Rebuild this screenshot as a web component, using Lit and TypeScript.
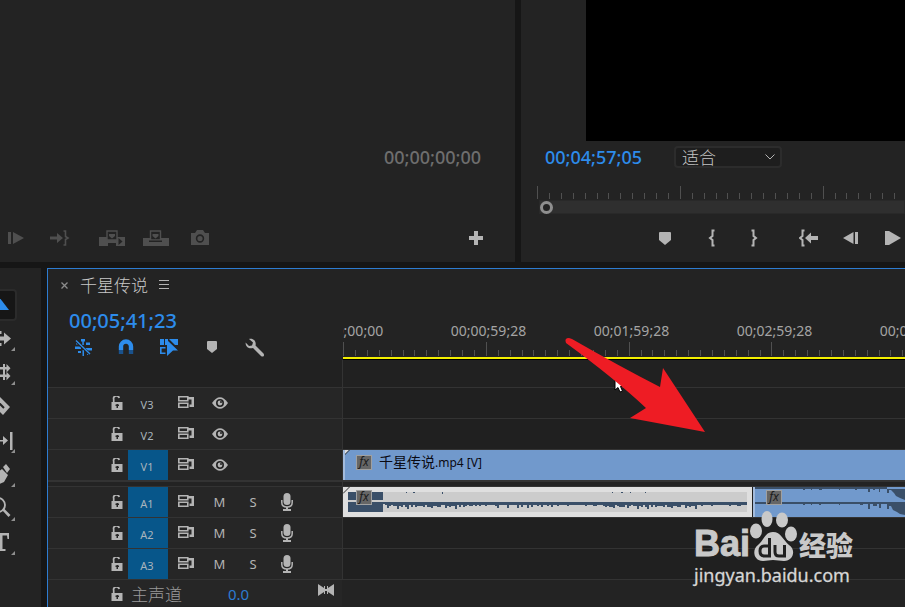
import { LitElement, html, css, svg } from "lit";
import { customElement } from "lit/decorators.js";
import { classMap } from "lit/directives/class-map.js";

const icon = (w: number, h: number, body: unknown) =>
  html`<svg width=${w} height=${h} viewBox="0 0 ${w} ${h}" aria-hidden="true">${body}</svg>`;

const icons = {
  playInOut: icon(16, 12, svg`<path d="M0 0h3v12H0zM5 0l11 6-11 6z"/>`),
  goOut: icon(20, 16, svg`<path d="M0 6.500h7V3l6 5-6 5V9.500H0z"/><path d="M13.500 1h2v5.500L18 8l-2.500 1.500V15h-2" fill="none" stroke="currentColor" stroke-width="1.600"/>`),
  insert: icon(26, 16, svg`<path d="M0 7h26v9H17v-3H9v3H0z"/><path d="M8 1h10v9H8z" fill="#232323" stroke="currentColor" stroke-width="1.400"/><path d="M10 4h6v2l-3 2.500L10 6z"/><path d="M19.500 8l4 3.500-4 3.500z" fill="#232323"/>`),
  overwrite: icon(26, 16, svg`<path d="M0 8h26v8H0z"/><path d="M7.500 1h10v9h-10z" fill="#232323" stroke="currentColor" stroke-width="1.400"/><path d="M9.500 4h6v2l-3 2.500-3-2.500z"/><path d="M6 10.500h13v1.500H6z" fill="#232323"/>`),
  camera: icon(20, 16, svg`<path d="M1 3h4l2-3h6l2 3h4v12H1z"/><circle cx="10" cy="8.500" r="3.400" fill="none" stroke="#232323" stroke-width="1.600"/>`),
  plus: icon(14, 14, svg`<path d="M5 0h4v5h5v4H9v5H5V9H0V5h5z"/>`),
  marker: icon(12, 13, svg`<path d="M0 1q0-1 1-1h10q1 0 1 1v7l-6 5-6-5z"/>`),
  markerSmall: icon(10, 12, svg`<path d="M0 1q0-1 1-1h8q1 0 1 1v7l-5 4-5-4z"/>`),
  braceOpen: icon(8, 18, svg`<path d="M6.500 1.500H4.500v5.500L2 9l2.500 2v5.500h2" fill="none" stroke="currentColor" stroke-width="2"/>`),
  braceClose: icon(8, 18, svg`<path d="M1.500 1.500h2v5.500L6 9l-2.500 2v5.500h-2" fill="none" stroke="currentColor" stroke-width="2"/>`),
  goIn: icon(20, 18, svg`<path d="M5.500 1.500H3.500v5.500L1 9l2.500 2v5.500h2" fill="none" stroke="currentColor" stroke-width="2"/><path d="M6 9l6-5.500V7h7v4h-7v3.500z"/>`),
  stepBack: icon(16, 12, svg`<path d="M0 6L10.500 0v12zM12 0h3v12h-3z"/>`),
  play: icon(16, 14, svg`<path d="M0 0h4l12 7-12 7H0z"/>`),
  chevron: icon(10, 6, svg`<path d="M0.500 0.500L5 5l4.500-4.500" fill="none" stroke="currentColor"/>`),
  close: icon(7, 7, svg`<path d="M0.500 0.500l6 6M6.500 0.500l-6 6" stroke="currentColor" stroke-width="1.300"/>`),
  menu: icon(10, 10, svg`<path d="M0 0h10v1H0zM0 4h10v1H0zM0 8h10v1H0z"/>`),
  nest: icon(18, 18, svg`<path d="M7 1h4v2.500H7zM8.300 3h1.500v4H8.300zM1 8.500h6V11H1zM12 4.500h4V7h-4zM10 10h8v2.500h-8zM4 13h3v2H4zM8.500 12H10v6H8.500zM13 14.500h3V17h-3zM2 5h3v1.500H2z"/><path d="M1 2l15 14.500" stroke="#232323" stroke-width="3"/><path d="M2 2.500l14 13.500" stroke="currentColor" stroke-width="1.400"/>`),
  magnet: icon(16, 16, svg`<path d="M3 11V7.500a5 5 0 0 1 10 0V11" fill="none" stroke="currentColor" stroke-width="4.400"/><path d="M.8 11h4.400v4H.8zM10.800 11h4.400v4h-4.400z" fill="#1a528c"/>`),
  linked: icon(18, 17, svg`<path d="M0 0h4v6H0zM5 0h3v6H5zM9 0h9v6h-3z"/><path d="M5.500 8.800H.8v5.400h4.700" fill="none" stroke="currentColor" stroke-width="1.600"/><path d="M7 1l11 10.500h-5L7 17z"/>`),
  wrench: icon(20, 19, svg`<path d="M4 1l4 3.500-1 3-3 .5L.6 4.500C.5 9 4 11 8 10l8 8c2 1.500 4-.5 2.500-2.500l-8-8C11.500 4 9 0 4 1z"/>`),
  lock: icon(12, 14, svg`<path d="M.5 6h11v8H.5z"/><path d="M2.700 6V3.500A2.700 2.700 0 0 1 8.200 2" fill="none" stroke="currentColor" stroke-width="1.700"/><path d="M5.500 8h1.500v4H5.500zM4.500 8.500h3.500V10H4.500z" fill="#262626"/>`),
  sync: icon(16, 12, svg`<path d="M.8.800h9v3.900h-9zM.8 7.300h9v3.900h-9z" fill="none" stroke="currentColor" stroke-width="1.600"/><path d="M10 1h6v10h-4.500V8.500H13.500v-5H10z"/>`),
  eye: icon(16, 12, svg`<path d="M0 6Q8-5.500 16 6 8 17.500 0 6z"/><circle cx="8" cy="6" r="4" fill="#232323"/><circle cx="8" cy="6" r="2.400"/><circle cx="9" cy="5" r="1" fill="#232323"/>`),
  mic: icon(12, 18, svg`<rect x="2.500" y="0" width="7" height="12" rx="3.500"/><path d="M.8 7v2.500Q.8 14 6 14t5.200-4.500V7" fill="none" stroke="currentColor" stroke-width="1.500"/><path d="M5 14h2v2.500H5zM2 16h8v2H2z"/>`),
  bowtie: icon(16, 12, svg`<path d="M0 0l6 4V2h1v8H6V8l-6 4zM16 0l-6 4V2H9v8h1V8l6 4z"/><path d="M7 5h2v2H7z"/>`),
};

const toolShape = (body: unknown, flyout = true) => html`<svg width="24" height="34" viewBox="0 0 24 34" aria-hidden="true">
  ${body}${flyout ? svg`<path d="M15 25v4h-4z" opacity="0.750"/>` : ""}</svg>`;

const tools = [
  { name: "Selection", on: true, art: toolShape(svg`<path d="M-8 0L9 22H-4z"/>`, false) },
  { name: "Track select", on: false, art: toolShape(svg`<path d="M-4 14.500h8V10.500l7 6-7 6v-4h-8zM-1 9h2.500v3H-1zM-1 21h2.500v3H-1z"/>`) },
  { name: "Ripple edit", on: false, art: toolShape(svg`<path d="M0 11h3V8h2v3h3v2.500H5v5h3V21H5v3H3v-3H0v-2.500h3v-5H0z"/><path d="M6.500 8l4 4.200-4 4.200zM6.500 15.800l4 4.200-4 4.200z"/>`) },
  { name: "Razor", on: false, art: toolShape(svg`<path d="M-1 6l11 11-7 8-5-5z"/><path d="M-1 13l5 5" stroke="#232323" stroke-width="2"/>`, false) },
  { name: "Slip", on: false, art: toolShape(svg`<path d="M-2 16h5V12l5 4.500L3 21v-3.500h-5zM10 8h2.500v18H10z"/>`) },
  { name: "Pen", on: false, art: toolShape(svg`<path d="M-3 15l5-4 6 6-4 7-7 3zM3 9l3-3 4 5-3 4z"/>`) },
  { name: "Zoom", on: false, art: toolShape(svg`<circle cx="-2" cy="13" r="7" fill="none" stroke="currentColor" stroke-width="1.800"/><path d="M2 18l2-1.500 6.500 6.500-2 2z"/>`) },
  { name: "Type", on: false, art: toolShape(svg`<path d="M-9 7H9v6H7.500L7 9.500H2.500V23h3v2H-5v-2h4V9.500H-9z"/>`) },
];

/* Twelve minor divisions to each major one. */
const ticks = (height: number) => html`<svg class="ticks" height=${height} aria-hidden="true">
  ${Array.from({ length: 240 }, (_, i) => {
    const h = i % 12 ? 6 : height;
    return svg`<rect x=${Math.round(i * 11.9)} y=${height - h} width="1" height=${h}/>`;
  })}</svg>`;

const dips = "0,1,2,1,2,0,1,3,2,2,1,0,2,4,1,2,3,2,2,4,1,0,2,0,1,0,1,0,2,1".split(",").map(Number);
const calm = "0,0,1,0,0,1,0,2,0,0,3,1,0,0,0,0,1,0".split(",").map(Number);

const selectedWave = () => {
  const bars = [];
  for (let x = 37; x < 398; x += 2) {
    const i = (x - 37) / 2;
    const set = x < 120 || (x > 255 && x < 350) ? dips : calm;
    bars.push(svg`<rect x=${x} y="10" width="2" height=${3 + set[(i * 7 + (i >> 2)) % set.length]}/>`);
  }
  return html`<svg class="wave" width="399" height="20" aria-hidden="true">
    <path d="M0 0h35v8H0zM0 10h35v10H0zM35 10h364v2H35zM58 0h1v1h-1zM65 0h2v1h-2zM94 0h1v2h-1zM264 0h1v1h-1zM273 0h2v1h-2zM282 0h1v1h-1zM297 0h1v1h-1z"/>${bars}</svg>`;
};

const blueWave = () => html`<svg class="wave" width="100%" height="30" aria-hidden="true">
  <path d="M0 0H400V2H0zM0 15H400V17H0zM48 2h2v1h-2zM56 2h1v1h-1zM64 2h3v1h-3zM84 2h1v1h-1zM100 2h2v1h-2zM113 2h2v3h-2zM118 2h2v1h-2zM124 2h1v3h-1z
    M132 2v4h2V3h2l3 3 2 3 4 2 5 2h250V0H132z
    M48 17h2v1h-2zM56 17h1v1h-1zM64 17h2v1h-2zM84 17h1v1h-1zM105 17h3v1h-3zM113 17h2v5h-2zM118 17h4v2h-4zM124 17h2v4h-2z
    M132 17v5h2v-3h2l2 4 4 2 3 2 5 1h250V17z"/></svg>`;

@customElement("app-root")
export class AppRoot extends LitElement {
  static styles = css`
    :host {
      display: grid;
      grid-template-rows: auto 1fr;
      row-gap: 6px;
      position: relative;
      min-height: 100vh;
      overflow: hidden;
      background: #161616;
      color: #b4b4b4;
      font-family: "Noto Sans", "Noto Sans CJK SC", sans-serif;
      font-size: 12px;
    }
    * { box-sizing: border-box; }
    svg { display: block; fill: currentColor; flex: none; }
    button {
      display: flex; align-items: center; justify-content: center;
      flex: none; margin: 0; padding: 0; border: 0;
      background: none; color: inherit; font: inherit;
    }
    .monitors { display: grid; grid-template-columns: 515fr 384fr; column-gap: 6px; min-height: 262px; }
    .panel { background: #232323; min-width: 0; overflow: hidden; }
    .monitor { display: flex; flex-direction: column; justify-content: flex-end; }
    .time { font-size: 18px; line-height: 24px; color: #2d8ceb; font-weight: 500; }
    .time.idle { color: #6e6e6e; align-self: flex-end; margin-right: 34px; }
    .time.current { font-size: 20px; line-height: 24px; }
    .controls { display: flex; align-items: center; height: 48px; gap: 14px; }
    .controls button { width: 30px; height: 30px; }
    .source-controls { margin-top: 45px; padding: 0 24px 0 1px; color: #4f4f4f; }
    .group { display: flex; gap: 14px; }
    .source-controls .group + .group { margin-left: 8px; }
    .source-controls .add { margin-left: auto; color: #b4b4b4; }
    .screen { flex: 1; min-height: 141px; margin-left: 65px; background: #000; }
    .readout { display: flex; align-items: center; gap: 32px; height: 33px; padding: 0 0 2px 24px; }
    .fit { position: relative; display: flex; align-items: center; }
    .fit select {
      appearance: none; width: 108px; height: 22px; padding: 0 6px; margin: 0;
      border: 2px solid #2c2c2c; border-radius: 4px; background: #1e1e1e;
      color: #c4c4c4; font: 300 17px/18px "Noto Sans CJK SC", sans-serif;
    }
    .fit svg { position: absolute; right: 7px; pointer-events: none; }
    .ticks { width: 100%; fill: #505050; overflow: hidden; }
    .scrub { padding: 12px 0 0 16px; }
    .scrub-bar { display: flex; align-items: center; height: 14px; margin: 1px 0 0 2px; background: #2f2f2f; border: 1px solid #292929; }
    .knob { width: 13px; height: 13px; flex: none; border: 3px solid #8f8f8f; border-radius: 50%; background: #232323; }
    .program-controls { padding-left: 129px; gap: 17px; }
    .program-controls .group { gap: 12px; }
    .program-controls .group + .group { margin-left: 8px; }

    .lower { display: grid; grid-template-columns: 41px minmax(0, 1fr); column-gap: 6px; }
    .tools { display: flex; flex-direction: column; padding-top: 21px; }
    .tools button { width: 24px; height: 34px; justify-content: flex-start; }
    .tools .on { width: 17px; height: 32px; overflow: hidden; background: #161616; border: 2px solid #2b2b2b; border-left: 0; border-radius: 0 4px 4px 0; color: #2d8ceb; }
    .tools .on + button { margin-top: 1px; }
    .timeline { border: solid #2d7cd1; border-width: 1px 0 0 1px; display: flex; flex-direction: column; }
    .tab { display: flex; align-items: center; height: 33px; padding: 0 0 1px 12px; gap: 11px; }
    .tab h1 { margin: 0; font: 300 17px/24px "Noto Sans CJK SC", sans-serif; color: #c8c8c8; }
    .tab .x { width: 9px; height: 20px; color: #8c8c8c; }
    .body { display: grid; grid-template-columns: 294px minmax(0, 1fr); flex: 1; }
    .head { height: 58px; padding: 7px 0 0 21px; }
    .toggles { display: flex; gap: 13px; margin: -1px 0 0 -1px; }
    .toggles button { width: 30px; height: 30px; }
    .toggles .lit { color: #2d8ceb; }
    .ruler { height: 58px; display: flex; flex-direction: column; justify-content: flex-end; overflow: hidden; border-bottom: 1px solid #000; margin-left: 1px; }
    .labels { display: flex; margin-left: -69px; }
    .labels span { flex: none; width: 143px; text-align: center; font-size: 14px; line-height: 22px; color: #a4a4a4; }
    .work-area { height: 2px; margin-top: 1px; background: #f2ee00; }
    .rows { background: #262626; }
    .lanes { background: #202020; border-left: 1px solid #333; }
    .spacer { height: 28px; border-bottom: 1px solid #333; background: #212121; }
    .split { height: 6px; border: solid #333; border-width: 1px 0; background: #232323; }
    .row { display: grid; grid-template-columns: 56px 25px 39px 35px 33px 34px 34px; height: 31px; border-bottom: 1px solid #333; }
    .row .label { font-size: 11px; color: #a9b4bc; padding-top: 2px; margin-left: -1px; padding-right: 2px; }
    .row .target { background: #07568a; }
    .row .lock { grid-column: 2; padding-bottom: 1px; }
    .row .sync { padding-bottom: 2px; }
    .row .text { font-size: 13px; }
    .master { display: flex; align-items: center; height: 26px; padding: 2px 0 0 56px; }
    .master .lock { width: 25px; }
    .master .name { width: 96px; padding-left: 2px; font: 300 17px/24px "Noto Sans CJK SC", sans-serif; color: #999; }
    .master .gain { width: 44px; padding-left: 3px; font-size: 15px; line-height: 24px; color: #2d7cd1; }
    .master .fold { width: 30px; margin: 0 0 9px 42px; }
    .lane { display: grid; grid-template-columns: minmax(0, 409fr) minmax(0, 152fr); height: 31px; border-bottom: 1px solid #333; column-gap: 1px; }
    .clip { position: relative; display: flex; align-items: flex-start; height: 30px; overflow: hidden; background: #7199cc; border-left: 2px solid #a3bbdc; }
    .clip.video { grid-column: 1 / -1; padding: 5px 0 0 11px; gap: 7px; color: #0a0a12; font-size: 12px; line-height: 14px; }
    .clip .cjk { font-size: 14px; }
    .clip.audio { padding: 3px 0 0 11px; }
    .clip.selected { border: 5px solid #dfdfdf; padding: 0 0 0 8px; background: #ccc; overflow: visible; }
    .clip.selected .fx { margin-top: -2px; }
    .clip.selected .wave { width: 100%; }
    .wave { position: absolute; left: 0; top: 0; fill: #3a4f68; }
    .fold-mark { position: absolute; left: -2px; top: 0; fill: #ddd; stroke: #333; }
    .clip.selected .fold-mark { left: -5px; top: -5px; }
    .fx { position: relative; width: 16px; height: 15px; flex: none; border: 1px solid #a0a0a0; background: #666; color: #1c1c1c; font: italic 12px/12px "Noto Sans", sans-serif; text-align: center; }
    .arrow { position: absolute; left: 564px; top: 337px; fill: #ee1c24; }
    .cursor { position: absolute; left: 614px; top: 377px; }
    .watermark { position: absolute; left: 694px; top: 510px; color: #c9c9c9; }
    .brand { display: flex; align-items: flex-end; height: 53px; }
    .brand b { font: bold 36px/42px "Liberation Sans", sans-serif; height: 40px; -webkit-text-stroke: 1px; }
    .brand svg { margin-left: -1px; }
    .brand .jy { font: 900 27px/36px "Noto Sans CJK SC", sans-serif; height: 36px; margin-left: 2px; }
    .site { font-size: 18px; line-height: 24px; color: #d6d6d6; -webkit-text-stroke: 0.3px; }
  `;

  private button(name: string, art: unknown, cls = "") {
    return html`<button class=${cls} aria-label=${name} title=${name}>${art}</button>`;
  }

  private track(id: string, target: boolean, audio: boolean) {
    return html`<div class="row">
      ${this.button(`Lock ${id}`, icons.lock, "lock")}
      <button class=${classMap({ label: true, target })}>${id}</button>
      ${this.button(`Sync lock ${id}`, icons.sync, "sync")}
      ${audio
        ? html`<button class="text">M</button><button class="text">S</button>${this.button(`Record ${id}`, icons.mic)}`
        : this.button(`Show ${id}`, icons.eye)}
    </div>`;
  }

  private foldMark() {
    return html`<svg class="fold-mark" width="7" height="7" aria-hidden="true"><path d="M0 0h6L0 6z" stroke="none"/><path d="M6.500 0L0 6.500"/></svg>`;
  }

  render() {
    return html`
      <section class="monitors">
        <div class="panel monitor">
          <span class="time idle">00;00;00;00</span>
          <div class="controls source-controls">
            <div class="group">${this.button("Play in to out", icons.playInOut)}${this.button("Go to out", icons.goOut)}</div>
            <div class="group">${this.button("Insert", icons.insert)}${this.button("Overwrite", icons.overwrite)}${this.button("Export frame", icons.camera)}</div>
            ${this.button("Button editor", icons.plus, "add")}
          </div>
        </div>
        <div class="panel monitor">
          <div class="screen"></div>
          <div class="readout">
            <span class="time">00;04;57;05</span>
            <label class="fit"><select aria-label="Zoom level"><option>适合</option></select>${icons.chevron}</label>
          </div>
          <div class="scrub">${ticks(13)}
            <div class="scrub-bar"><span class="knob"></span></div>
          </div>
          <div class="controls program-controls">
            ${this.button("Add marker", icons.marker)}
            <div class="group">${this.button("Mark in", icons.braceOpen)}${this.button("Mark out", icons.braceClose)}</div>
            <div class="group">${this.button("Go to in", icons.goIn)}${this.button("Step back", icons.stepBack)}${this.button("Play", icons.play)}</div>
          </div>
        </div>
      </section>

      <section class="lower">
        <nav class="panel tools">${tools.map((t) => this.button(t.name, t.art, t.on ? "on" : ""))}</nav>
        <div class="panel timeline">
          <div class="tab">
            ${this.button("Close", icons.close, "x")}
            <h1>千星传说</h1>
            ${this.button("Panel menu", icons.menu)}
          </div>
          <div class="body">
            <div>
              <div class="head">
                <div class="time current">00;05;41;23</div>
                <div class="toggles">
                  ${this.button("Nest", icons.nest, "lit")}
                  ${this.button("Snap", icons.magnet, "lit")}
                  ${this.button("Linked selection", icons.linked, "lit")}
                  ${this.button("Marker", icons.markerSmall)}
                  ${this.button("Settings", icons.wrench)}
                </div>
              </div>
              <div class="rows">
                <div class="spacer"></div>
                ${["V3", "V2", "V1"].map((id) => this.track(id, id === "V1", false))}
                <div class="split"></div>
                ${["A1", "A2", "A3"].map((id) => this.track(id, true, true))}
                <div class="master">
                  ${this.button("Lock master", icons.lock, "lock")}
                  <span class="name">主声道</span>
                  <span class="gain">0.0</span>
                  ${this.button("Collapse", icons.bowtie, "fold")}
                </div>
              </div>
            </div>
            <div>
              <div class="ruler">
                <div class="labels">
                  ${["00;00;00;00", "00;00;59;28", "00;01;59;28", "00;02;59;28", "00;03;59;28"].map((t) => html`<span>${t}</span>`)}
                </div>
                ${ticks(14)}
                <div class="work-area"></div>
              </div>
              <div class="lanes">
                <div class="spacer"></div>
                <div class="lane"></div>
                <div class="lane"></div>
                <div class="lane">
                  <div class="clip video">${this.foldMark()}<span class="fx">fx</span><span><span class="cjk">千星传说</span>.mp4 [V]</span></div>
                </div>
                <div class="split"></div>
                <div class="lane">
                  <div class="clip audio selected">${selectedWave()}${this.foldMark()}<span class="fx">fx</span></div>
                  <div class="clip audio">${blueWave()}<span class="fx">fx</span></div>
                </div>
                <div class="lane"></div>
                <div class="lane"></div>
              </div>
            </div>
          </div>
        </div>
      </section>

      <svg class="cursor" width="12" height="18" viewBox="0 0 12 18" aria-hidden="true">
        <path d="M1 1v12l3-2.500 2 4.500 2.500-1-2-4.500H11z" fill="#fff" stroke="#000"/>
      </svg>
      <svg class="arrow" width="142" height="96" viewBox="0 0 142 96" aria-hidden="true">
        <path d="M2 6Q0 1 5 1L8 2Q55 29 96 50L99 31 141 95 66 81 82 71Q50 41 2 6z"/>
      </svg>
      <div class="watermark">
        <div class="brand">
          <b>Bai</b>
          <svg width="48" height="54" viewBox="0 0 48 54" aria-hidden="true">
            <ellipse cx="7" cy="22" rx="6" ry="7.500"/><ellipse cx="18" cy="10" rx="5.500" ry="8"/>
            <ellipse cx="33" cy="11" rx="6" ry="7.500"/><ellipse cx="42" cy="25" rx="6" ry="7.500"/>
            <path d="M24 23c-8 0-9 8-15 13-6 4-5 16 5 16 4 0 6-1 10-1s7 1 11 1c10 0 12-12 5-16-6-5-8-13-16-13z"/>
            <path d="M20.500 29v18h-5q-4.500 0-4.500-5t4.500-5h5M26 36v7q0 4 4 4h5.500V36" fill="none" stroke="#202020" stroke-width="3"/>
          </svg>
          <span class="jy">经验</span>
        </div>
        <div class="site">jingyan.baidu.com</div>
      </div>
    `;
  }
}
